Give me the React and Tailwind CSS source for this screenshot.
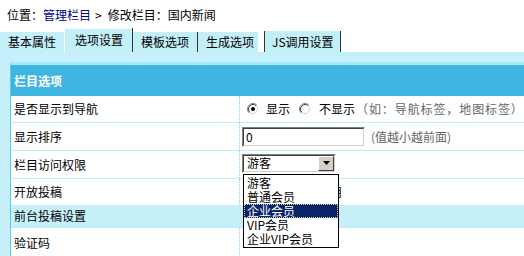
import React from "react";

const FONT = { fontFamily: '"Noto Sans CJK SC", "Noto Sans", sans-serif' };

function Radio({ checked }) {
  return (
    <svg width="12" height="12" viewBox="0 0 12 12" className="shrink-0">
      <circle cx="6" cy="6" r="5" fill="#ffffff" />
      <path d="M2.11 9.89 A5.5 5.5 0 0 1 9.89 2.11" fill="none" stroke="#808080" strokeWidth="1" />
      <path d="M9.89 2.11 A5.5 5.5 0 0 1 2.11 9.89" fill="none" stroke="#ffffff" strokeWidth="1" />
      <path d="M2.82 9.18 A4.5 4.5 0 0 1 9.18 2.82" fill="none" stroke="#404040" strokeWidth="1" />
      <path d="M9.18 2.82 A4.5 4.5 0 0 1 2.82 9.18" fill="none" stroke="#d4d0c8" strokeWidth="1" />
      {checked && <circle cx="6" cy="6" r="2" fill="#000000" />}
    </svg>
  );
}

function Inset({ className, children }) {
  return (
    <div className={"border border-t-[#808080] border-l-[#808080] border-b-white border-r-white " + className}>
      <div className="w-full h-full border border-t-[#404040] border-l-[#404040] border-b-[#d4d0c8] border-r-[#d4d0c8] bg-white flex items-center">
        {children}
      </div>
    </div>
  );
}

function Row({ label, children, h }) {
  return (
    <div className={"flex border-t border-[#bdeef8] bg-white " + h}>
      <div className="w-[229px] shrink-0 flex items-center pl-[3px] border-r border-dotted border-[#8fd0f0]">
        {label}
      </div>
      <div className="flex-1 flex items-center">{children}</div>
    </div>
  );
}

export default function App() {
  const items = ["游客", "普通会员", "企业会员", "VIP会员", "企业VIP会员"];
  return (
    <div className="w-[524px] h-[256px] overflow-hidden bg-white relative text-[12px] text-black leading-none" style={FONT}>
      {/* breadcrumb */}
      <div className="h-[29px] flex items-center pl-[7px] pt-[1px]">
        位置：<span className="text-[#000080]">管理栏目</span>
        <span className="pl-[4px] pr-[6px]">&gt;</span>修改栏目：国内新闻
      </div>
      {/* tabs */}
      <div className="h-[23px] flex items-end">
        <div className="w-[64px] h-[20px] bg-[#c3eff9] flex items-center pl-[8px]">基本属性</div>
        <div className="w-[1px] h-[20px] bg-white" />
        <div className="w-[67px] h-[23px] bg-[#c3eff9] flex items-center pl-[10px] pb-[2px]">选项设置</div>
        <div className="w-[1px] h-[24px] bg-[#333333]" />
        <div className="w-[64px] h-[20px] bg-[#c3eff9] flex items-center pl-[8px]">模板选项</div>
        <div className="w-[1px] h-[20px] bg-[#333333]" />
        <div className="w-[60px] h-[20px] bg-[#c3eff9] flex items-center pl-[8px]">生成选项</div>
        <div className="w-[6px] h-[20px] bg-white" />
        <div className="w-[1px] h-[21px] bg-[#333333]" />
        <div className="w-[75px] h-[21px] bg-[#c3eff9] flex items-center pl-[7px]">JS调用设置</div>
        <div className="w-[1px] h-[21px] bg-[#333333]" />
      </div>
      {/* panel */}
      <div className="bg-[#c6f0f9] pt-[10px] pl-[10px] h-[204px]">
        <div className="border-l border-[#5ccaf0] border-t-[3px] border-t-[#a6e9f8]">
          <div className="h-[31px] bg-[#3fb5e1] text-white font-bold flex items-center pl-[3px] pt-[1px]">栏目选项</div>
          <div className="flex bg-white h-[26px]">
            <div className="w-[229px] shrink-0 flex items-center pl-[3px] border-r border-dotted border-[#8fd0f0]">是否显示到导航</div>
            <div className="flex-1 flex items-center pl-[7px]">
              <Radio checked />
              <span className="ml-[7px]">显示</span>
              <span className="ml-[9px]"><Radio /></span>
              <span className="ml-[8px]">不显示</span>
              <span className="ml-[1px] text-[#666666] tracking-[0.9px]">（如：导航标签，地图标签）</span>
            </div>
          </div>
          <Row label="显示排序" h="h-[28px]">
            <Inset className="ml-[2px] w-[123px] h-[20px]">
              <span className="pl-[2px]">0</span>
            </Inset>
            <span className="ml-[6px] text-[#666666]">(值越小越前面)</span>
          </Row>
          <Row label="栏目访问权限" h="h-[28px]">
            <Inset className="ml-[2px] w-[94px] h-[19px] -mt-[3px]">
              <span className="pl-[3px] flex-1">游客</span>
              <div className="w-[16px] h-[15px] bg-[#d4d0c8] border border-t-white border-l-white border-b-[#404040] border-r-[#404040] flex items-center justify-center">
                <svg width="7" height="4" viewBox="0 0 7 4"><path d="M0 0 H7 L3.5 4 Z" fill="#000" /></svg>
              </div>
            </Inset>
          </Row>
          <Row label="开放投稿" h="h-[27px]">
            <span className="ml-[78px]">启用</span>
          </Row>
          <div className="h-[22px] bg-[#c6f0f9] flex items-center pl-[3px]">前台投稿设置</div>
          <Row label="验证码" h="h-[30px]">
            <span />
          </Row>
        </div>
      </div>
      {/* open dropdown list */}
      <div className="absolute left-[243px] top-[174px] w-[96px] h-[74px] border border-black bg-white pt-[1px]">
        {items.map((t, i) => (
          <div
            key={t}
            className={
              "h-[14px] flex items-center pl-[3px] " +
              (i === 2 ? "bg-[#0a246a] text-white outline outline-1 outline-dotted outline-[#d8d8a0] -outline-offset-1" : "")
            }
          >
            {t}
          </div>
        ))}
      </div>
    </div>
  );
}
